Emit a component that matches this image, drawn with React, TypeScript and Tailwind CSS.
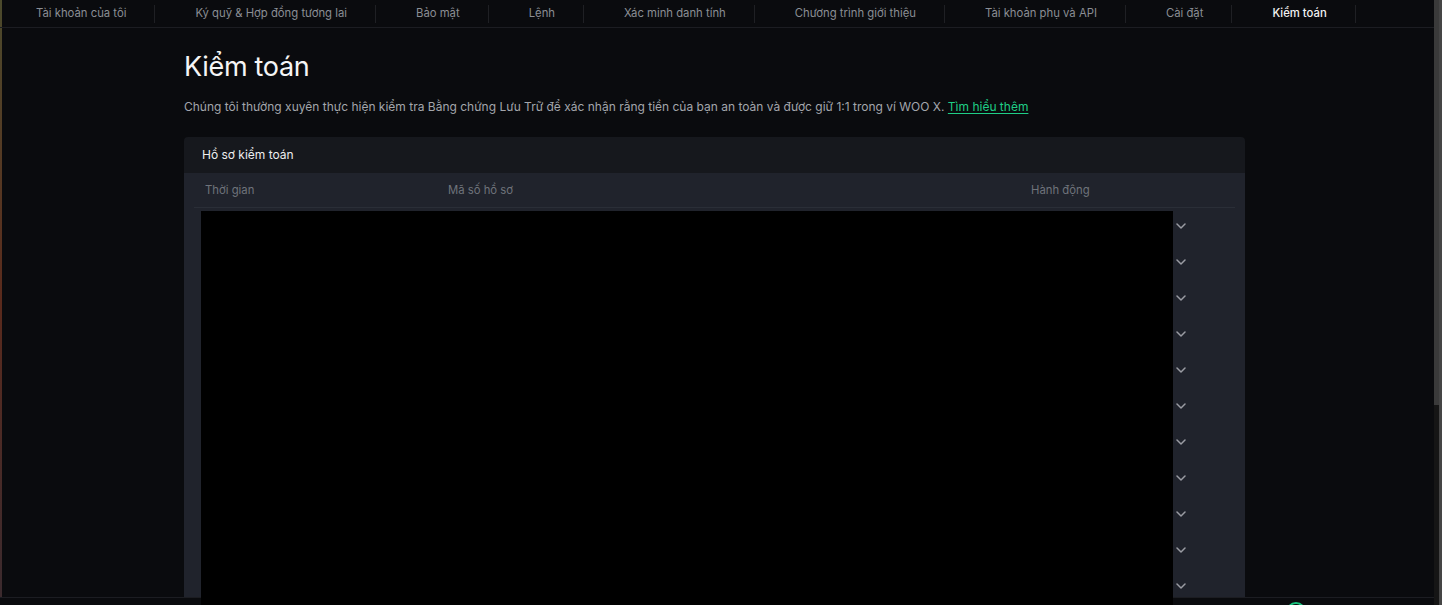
import React from "react";

const tabs = [
  "Tài khoản của tôi",
  "Ký quỹ & Hợp đồng tương lai",
  "Bảo mật",
  "Lệnh",
  "Xác minh danh tính",
  "Chương trình giới thiệu",
  "Tài khoản phụ và API",
  "Cài đặt",
  "Kiểm toán",
];

function Chevron() {
  return (
    <svg width="10" height="6" viewBox="0 0 10 6" fill="none">
      <path d="M1 1l4 4 4-4" stroke="#9a9ca3" strokeWidth="1.5" strokeLinecap="round" strokeLinejoin="round" />
    </svg>
  );
}

export default function App() {
  const rows = Array.from({ length: 12 });
  return (
    <div
      className="relative flex w-[1442px] h-[605px] overflow-hidden bg-[#0a0b0e] text-white"
      style={{ fontFamily: "Inter, 'Noto Sans', sans-serif" }}
    >
      {/* left edge strip */}
      <div className="w-[2px] shrink-0 bg-gradient-to-b from-[#4b4a2c] via-[#5a2a1c] to-[#3a2a2e]" />

      {/* main column */}
      <div className="flex flex-col flex-1 min-w-0">
        {/* nav */}
        <div className="flex h-[28px] shrink-0 items-center border-b border-[#1c1d22] ml-[-6px]">
          {tabs.map((t, i) => (
            <div
              key={t}
              className="flex items-center h-[18px] pl-[40px] pr-[28px] border-r border-[#1f2024] whitespace-nowrap"
            >
              <span
                className={
                  i === tabs.length - 1
                    ? "text-[11.3px] leading-none text-[#f2f2f2] font-medium"
                    : "text-[11.3px] leading-none text-[#8b8e94]"
                }
              >
                {t}
              </span>
            </div>
          ))}
        </div>

        {/* content */}
        <div className="pl-[182px] pr-[189px] pt-[22px]">
          <h1 className="text-[27px] leading-[34px] font-normal text-[#f5f5f5] tracking-[-0.3px]">Kiểm toán</h1>
          <p className="mt-[14px] text-[12px] leading-[18px] text-[#a3a6ac]">
            Chúng tôi thường xuyên thực hiện kiểm tra Bằng chứng Lưu Trữ để xác nhận rằng tiền của bạn an toàn và được giữ 1:1 trong ví WOO X.{" "}
            <span className="text-[#1fce86] underline underline-offset-2">Tìm hiểu thêm</span>
          </p>

          {/* card */}
          <div className="mt-[21px] rounded-t-[4px] overflow-hidden">
            <div className="h-[36px] bg-[#16181d] flex items-center pl-[18px]">
              <span className="text-[12px] text-[#eeeeee]">Hồ sơ kiểm toán</span>
            </div>
            <div className="bg-[#20232c] px-[10px]">
              <div className="grid grid-cols-[243px_583px_1fr] h-[35px] items-center border-b border-[#2a2e37] pl-[11px] text-[11.3px] text-[#6f737b]">
                <span>Thời gian</span>
                <span>Mã số hồ sơ</span>
                <span>Hành động</span>
              </div>
              <div className="relative">
                {rows.map((_, i) => (
                  <div key={i} className="h-[36px] flex items-center justify-end pr-[49px]">
                    <Chevron />
                  </div>
                ))}
                <div className="absolute z-20 left-[7px] top-[3px] w-[972px] h-[420px] bg-black" />
              </div>
            </div>
          </div>
        </div>
      </div>

      {/* scrollbar */}
      <div className="w-[8px] shrink-0 flex bg-[#151515]">
        <div className="w-[5px] h-[405px] bg-[#3a3a3a]" />
        <div className="w-[3px] bg-[#454545]" />
      </div>

      {/* bottom bar */}
      <div className="absolute z-10 left-0 right-[8px] bottom-0 h-[8px] bg-[#0a0b0e] border-t border-[#1c1d22]">
        <div className="absolute left-[1286px] top-[4px] w-[20px] h-[20px] rounded-full border-2 border-[#19c37d]" />
      </div>
    </div>
  );
}
